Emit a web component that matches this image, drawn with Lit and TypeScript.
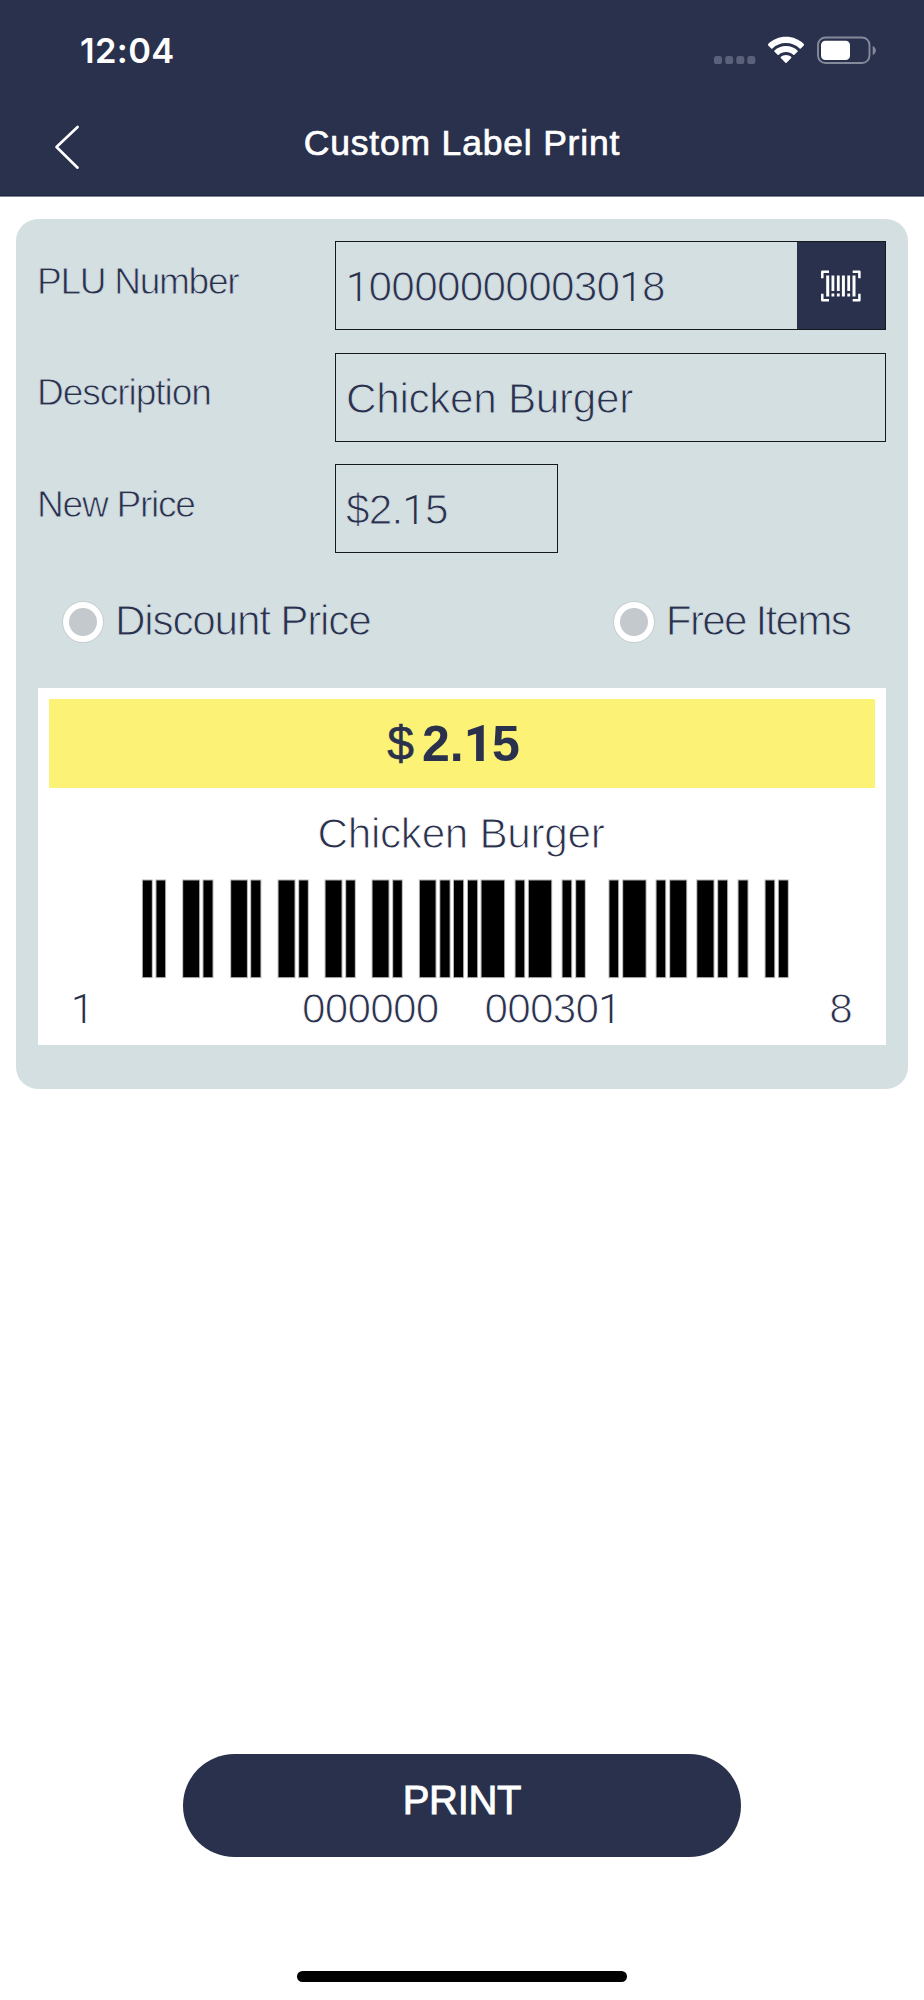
import { LitElement, html, css, svg } from "lit";
import { customElement, property } from "lit/decorators.js";

const BARS: [number, number][] = [
  [142.7, 9.3], [156.3, 9], [183, 16.3], [203.3, 9.4], [231, 16.1], [251, 9.6],
  [278.4, 16.3], [299, 9], [325.4, 16.3], [346, 9], [372.4, 16.3], [393, 9],
  [419.7, 16], [440.1, 9.7], [453.8, 9.5], [467.8, 9.5], [481.4, 22.9],
  [515.4, 9], [528.7, 22.7], [562.4, 9], [576, 9], [609.3, 9], [623, 22.8],
  [656.4, 9], [670, 16.4], [697.1, 16.6], [718, 9.3], [738.4, 9.3],
  [765.4, 9], [778.7, 9.3],
];

const digits = (value: string) =>
  value.split(/(1)/).map((part) => (part === "1" ? html`<span class="one">1</span>` : part));

const numerals = css`
  .one { font-family: Roboto, Inter, sans-serif; font-weight: 300; font-size: 41.200px; letter-spacing: -0.300px; line-height: 1;
    -webkit-text-stroke: 0; }
`;

@customElement("status-bar")
class StatusBar extends LitElement {
  static styles = css`
    :host { display: flex; justify-content: space-between; align-items: flex-start;
      height: 100px; padding: 0 47px 0 80px; box-sizing: border-box; color: #fff; }
    .time { font: 600 34.500px/40px Inter, sans-serif; padding-top: 30.500px; letter-spacing: 0.350px; }
    .icons { display: flex; padding-top: 32px; }
  `;
  render() {
    return html`
      <span class="time">12:04</span>
      <div class="icons">
        <svg width="166" height="36" viewBox="711 32 166 36" fill="#fff">
          <g fill="#5b617a">
            <rect x="714" y="56" width="8" height="8" rx="2.6" />
            <rect x="725.2" y="56" width="8" height="8" rx="2.6" />
            <rect x="736.3" y="56" width="8" height="8" rx="2.6" />
            <rect x="747.3" y="56" width="8" height="8" rx="2.6" />
          </g>
          <path d="M786 36.8c7 0 13.2 2.7 17.8 7.2.4.4.4 1 0 1.4l-3 3c-.3.3-.8.3-1.2 0-3.6-3.4-8.4-5.4-13.6-5.4s-10 2-13.6 5.4c-.4.3-.9.3-1.2 0l-3-3c-.4-.4-.4-1 0-1.4 4.6-4.5 10.8-7.2 17.8-7.2z" />
          <path d="M786 45.9c4.5 0 8.5 1.7 11.5 4.5.4.4.4.9 0 1.3l-3.1 3.1c-.3.3-.8.3-1.2 0-1.900-1.700-4.400-2.700-7.200-2.700s-5.300 1-7.200 2.700c-.4.3-.9.3-1.200 0l-3.100-3.100c-.4-.4-.4-.9 0-1.300 3-2.800 7-4.500 11.500-4.500z" />
          <path d="M786 55c1.900 0 3.700.7 5.100 1.800.4.4.4.9.1 1.300l-4.600 4.700c-.4.4-.8.4-1.200 0l-4.600-4.700c-.3-.4-.3-.9.1-1.300 1.400-1.100 3.200-1.800 5.100-1.800z" />
          <rect x="818" y="37.5" width="51.5" height="25.5" rx="7.5" fill="none" stroke="#858a9b" stroke-width="1.9" />
          <rect x="821" y="40.8" width="29" height="19.2" rx="4.3" />
          <path d="M872.7 46v9c1.900-.8 3.100-2.500 3.100-4.500s-1.200-3.700-3.100-4.500z" fill="#858a9b" />
        </svg>
      </div>
    `;
  }
}

@customElement("nav-header")
class NavHeader extends LitElement {
  @property() heading = "";
  static styles = css`
    :host { display: grid; grid-template-columns: 100px 1fr 100px; height: 97px; box-sizing: border-box;
      border-bottom: 1px solid #7f8396; box-shadow: inset 0 -1px #1f2743; color: #fff; }
    .back { padding: 22px 0 0 52px; }
    .title { text-align: center; padding-top: 22.700px; font: 35.500px/40px "Liberation Sans", Arial, sans-serif;
      letter-spacing: 0.800px; -webkit-text-stroke: 0.700px #fff; }
  `;
  render() {
    return html`
      <div class="back">
        <svg width="30" height="50" viewBox="52 122 30 50" fill="none" stroke="#fff" stroke-width="2.600" stroke-linecap="round" stroke-linejoin="round">
          <path d="M77.600 127 56.500 147l21.100 20.700" />
        </svg>
      </div>
      <div class="title">${this.heading}</div>
      <div></div>
    `;
  }
}

@customElement("radio-option")
class RadioOption extends LitElement {
  @property() label = "";
  static styles = css`
    :host { display: flex; align-items: center; }
    .dot { width: 28px; height: 28px; border: 6.500px solid #fff; border-radius: 50%;
      background: #c3c9cc; box-shadow: 0 0 0 1px #c6cccf; flex: none; }
    .text { white-space: pre; padding-bottom: 2px; margin-left: 12px; }
  `;
  render() {
    return html`<span class="dot"></span><span class="text">${this.label}</span>`;
  }
}

@customElement("label-preview")
class LabelPreview extends LitElement {
  static styles = [numerals, css`
    :host { display: block; height: 357px; padding: 11px 11px 0; box-sizing: border-box; background: #fff;
      -webkit-text-stroke: 1px #fff; }
    .price { display: flex; justify-content: center; gap: 8px; height: 89px; background: #fcf275;
      padding-right: 17px; box-sizing: border-box; font-size: 50px; line-height: 90px; -webkit-text-stroke: 0; }
    .currency { font-size: 48px; -webkit-text-stroke: 0.600px #2a314d; }
    .amount { font-weight: 700; }
    .amount .one { font-size: 50px; font-weight: 800; letter-spacing: -0.500px; }
    .name { text-align: center; line-height: 48px; padding: 22px 2px 0 0; letter-spacing: -0.330px; }
    .bars { display: block; margin: 20px 0 0 91px; }
    .digits { display: grid; grid-template-columns: 231px auto 1fr auto; line-height: 46px; padding: 6px 23px 0 22px; letter-spacing: -0.770px; }
    .group { display: flex; gap: 46px; }
  `];
  render() {
    return html`
      <div class="price"><span class="currency">$</span><span class="amount">${digits("2.15")}</span></div>
      <div class="name">Chicken Burger</div>
      <svg class="bars" width="652" height="102" viewBox="140 879 652 102">
        ${BARS.map(([x, w]) => svg`<rect x=${x + 0.2} y="881.5" width=${w - 0.4} height="96.6" fill="#000" stroke="#000" stroke-opacity="0.3" stroke-width="2" />`)}
      </svg>
      <div class="digits">
        <span>${digits("1")}</span>
        <span class="group"><span>000000</span><span>${digits("000301")}</span></span>
        <span></span>
        <span>8</span>
      </div>
    `;
  }
}

@customElement("app-root")
class AppRoot extends LitElement {
  static styles = [numerals, css`
    :host { display: flex; flex-direction: column; height: 2000px; background: #fff; color: #2a314d;
      font-family: "Liberation Sans", Arial, sans-serif; font-size: 42.300px; }
    .top { background: #2a314d; flex: none; }
    .card { margin: 22px 16px 0; padding: 22px 22px 0; height: 870px; box-sizing: border-box; flex: none;
      border-radius: 22px; background: #d4dfe1; -webkit-text-stroke: 1px #d4dfe1; }
    .form { display: grid; grid-template-columns: 297px 1fr; grid-auto-rows: 89.300px; row-gap: 22.300px; }
    .label { font-size: 37.100px; line-height: 80px; margin-left: -1px; -webkit-text-stroke-width: 0.800px; }
    .plu-label { letter-spacing: -1.300px; }
    .desc-label { letter-spacing: -1.050px; line-height: 79px; }
    .price-label { letter-spacing: -1.250px; }
    .field { display: flex; justify-content: space-between; border: 1px solid #15181c; box-sizing: border-box;
      line-height: 90px; padding-left: 10px; white-space: pre; }
    .code { padding-left: 10px; letter-spacing: -0.720px; }
    .desc { letter-spacing: -0.330px; }
    .money { width: 223px; letter-spacing: -0.770px; }
    .scan { display: grid; place-items: center; width: 88px; background: #2a314d; }
    .options { display: flex; justify-content: space-between; height: 41px; margin: 48px 36px 46px 25px; }
    .discount { letter-spacing: -1.230px; }
    .free { letter-spacing: -1.800px; }
    .spacer { flex: 1; }
    .print { flex: none; align-self: center; width: 558px; height: 103px; border: 0; border-radius: 51.500px; padding: 0 0 10px;
      background: #2a314d; color: #fff; font: 40px/93px "Liberation Sans", Arial, sans-serif; letter-spacing: -0.300px;
      -webkit-text-stroke: 0.900px #fff; }
    .home { flex: none; align-self: center; width: 330px; height: 11px; border-radius: 6px; background: #000; margin: 114px 0 18px; }
  `];
  render() {
    return html`
      <div class="top">
        <status-bar></status-bar>
        <nav-header heading="Custom Label Print"></nav-header>
      </div>
      <div class="card">
        <div class="form">
          <div class="label plu-label">PLU Number</div>
          <div class="field code">
            <span>${digits("10000000003018")}</span>
            <span class="scan">
              <svg width="40" height="32" viewBox="822 269.500 40 32" fill="none" stroke="#fff">
                <path stroke-width="2.500" stroke-linejoin="round" d="M830 271.300h-6.700v6.500M853.700 271.300h6.700v6.500M830 299.700h-6.700v-6.500M853.700 299.700h6.700v-6.500" />
                <path stroke-width="3" d="M828.700 275v21M844.400 275v21M855 275v21" />
                <path stroke-width="2.800" d="M833.900 275v15.500M839.300 275v15.500M849.700 275v15.500M833.900 293v3M839.300 293v3M849.700 293v3" />
              </svg>
            </span>
          </div>
          <div class="label desc-label">Description</div>
          <div class="field desc">Chicken Burger</div>
          <div class="label price-label">New Price</div>
          <div class="field money"><span>${digits("$2.15")}</span></div>
        </div>
        <div class="options">
          <radio-option class="discount" label="Discount Price"></radio-option>
          <radio-option class="free" label="Free Items"></radio-option>
        </div>
        <label-preview></label-preview>
      </div>
      <div class="spacer"></div>
      <button class="print">PRINT</button>
      <div class="home"></div>
    `;
  }
}
